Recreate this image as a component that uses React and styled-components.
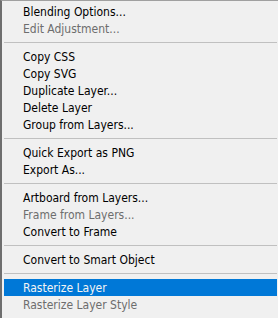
import React from "react";
import styled, { createGlobalStyle } from "styled-components";

const Global = createGlobalStyle`
  html, body { margin: 0; padding: 0; background: #f0f0f0; }
  body { width: 278px; height: 318px; overflow: hidden; }
`;

const Menu = styled.div`
  box-sizing: border-box;
  width: 278px;
  min-height: 318px;
  background: #f0f0f0;
  border-top: 1px solid #a0a0a0;
  border-left: 2px solid #6e6e6e;
  padding: 2px 1px 6px 2px;
  display: flex;
  flex-direction: column;
  font-family: "DejaVu Sans Condensed", "DejaVu Sans", sans-serif;
  font-size: 12px;
`;

const Item = styled.div`
  height: 17px;
  line-height: 16px;
  padding: 1px 0 0 19px;
  box-sizing: border-box;
  white-space: nowrap;
  color: ${(p) => (p.$active ? "#f4f4f4" : p.$disabled ? "#6d6d6d" : "#000000")};
  background: ${(p) => (p.$active ? "#0078d7" : "transparent")};
`;

const Separator = styled.div`
  height: 1px;
  margin: 5px 0;
  background: #c0c0c0;
`;

const groups = [
  [
    { t: "Blending Options..." },
    { t: "Edit Adjustment...", d: true },
  ],
  [
    { t: "Copy CSS" },
    { t: "Copy SVG" },
    { t: "Duplicate Layer..." },
    { t: "Delete Layer" },
    { t: "Group from Layers..." },
  ],
  [{ t: "Quick Export as PNG" }, { t: "Export As..." }],
  [
    { t: "Artboard from Layers..." },
    { t: "Frame from Layers...", d: true },
    { t: "Convert to Frame" },
  ],
  [{ t: "Convert to Smart Object" }],
  [{ t: "Rasterize Layer", a: true }, { t: "Rasterize Layer Style", d: true }],
];

export default function App() {
  return (
    <>
      <Global />
      <Menu>
        {groups.map((g, gi) => (
          <React.Fragment key={gi}>
            {gi > 0 && <Separator />}
            {g.map((it) => (
              <Item key={it.t} $disabled={it.d} $active={it.a}>
                {it.t}
              </Item>
            ))}
          </React.Fragment>
        ))}
      </Menu>
    </>
  );
}
